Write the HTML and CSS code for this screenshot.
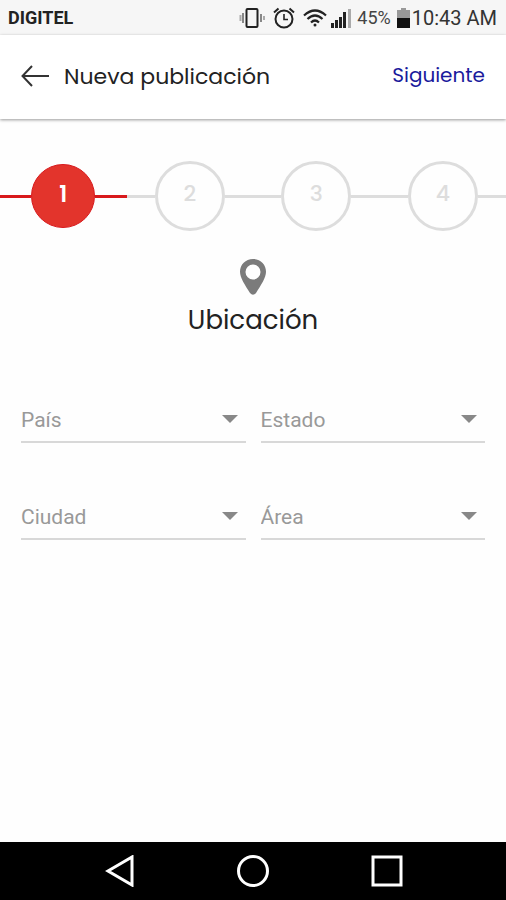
FILE: index.html
```
<!DOCTYPE html>
<html lang="es">
<head>
  <meta charset="UTF-8">
  <meta name="viewport" content="width=device-width, initial-scale=1">
  <title>Nueva publicación</title>
  <link rel="stylesheet" href="styles.css">
</head>
<body>
  <div class="status-bar">
    <span class="carrier">DIGITEL</span>
    <div class="status-icons">
      <!-- vibrar -->
      <svg width="26" height="22" viewBox="0 0 26 22">
        <rect x="7.5" y="2" width="11" height="18" rx="1" fill="none" stroke="#222" stroke-width="2"/>
        <path d="M4 6v10M22 7v8" stroke="#888" stroke-width="2"/>
        <path d="M1.500 8v6M25 9v4" stroke="#aaa" stroke-width="2"/>
      </svg>
      <!-- alarma -->
      <svg width="22" height="22" viewBox="0 0 22 22" fill="none" stroke="#222" stroke-width="2">
        <circle cx="11" cy="12" r="8.500"/>
        <path d="M11 7v5.500h4" stroke-width="1.600"/>
        <path d="M1 5.500L5.500 1.500M21 5.500L16.500 1.500"/>
      </svg>
      <!-- wifi -->
      <svg class="wifi" width="24" height="18" viewBox="0 0 24 18" fill="none" stroke="#222" stroke-width="2.200">
        <path d="M1 6.500Q12-3.500 23 6.500M4.500 10Q12 3 19.500 10M8 13.500Q12 9.500 16 13.500"/>
        <circle cx="12" cy="16" r="1.500" fill="#222" stroke="none"/>
      </svg>
      <!-- señal -->
      <svg width="20" height="20" viewBox="0 0 20 20">
        <path d="M0 15h3v5H0zM4 12h3v8H4zM8 9h3v11H8zM12 4h3v16h-3z" fill="#222"/>
        <path d="M17 1h3v19h-3z" fill="#aaa"/>
      </svg>
      <span class="percent">45%</span>
      <!-- batería -->
      <svg width="13" height="20" viewBox="0 0 13 20">
        <path d="M4 0h5v2h4v8H0V2h4z" fill="#999"/>
        <path d="M0 10h13v10H0z" fill="#111"/>
      </svg>
      <span class="clock">10:43 AM</span>
    </div>
  </div>

  <header class="toolbar">
    <button class="back" type="button" aria-label="Volver">
      <svg width="28" height="22" viewBox="0 0 28 22" fill="none" stroke="#333" stroke-width="2">
        <path d="M28 11H1.500M11 1L1.500 11L11 21"/>
      </svg>
    </button>
    <h1 class="title">Nueva publicación</h1>
    <button class="next" type="submit" form="location">Siguiente</button>
  </header>

  <main class="content">
    <ol class="steps">
      <li class="step active"><span class="number">1</span></li>
      <li class="step"><span class="number">2</span></li>
      <li class="step"><span class="number">3</span></li>
      <li class="step"><span class="number">4</span></li>
    </ol>

    <div class="heading">
      <svg width="26" height="36" viewBox="0 0 26 36">
        <path fill="#7b7b7b" fill-rule="evenodd" d="M13 0C5.500 0 0 5.500 0 12.800C0 19 5 26 10 34Q13 37.500 16 34C21 26 26 19 26 12.800C26 5.500 20.500 0 13 0zM13 5.500a7.500 7.500 0 1 1 0 15a7.500 7.500 0 1 1 0-15z"/>
      </svg>
      <h2>Ubicación</h2>
    </div>

    <form class="fields" id="location">
      <div class="field">
        <select aria-label="País"><option>País</option></select>
        <svg width="16" height="8" viewBox="0 0 16 8"><path d="M0 0h16L8 8z" fill="#888"/></svg>
      </div>
      <div class="field">
        <select aria-label="Estado"><option>Estado</option></select>
        <svg width="16" height="8" viewBox="0 0 16 8"><path d="M0 0h16L8 8z" fill="#888"/></svg>
      </div>
      <div class="field">
        <select aria-label="Ciudad"><option>Ciudad</option></select>
        <svg width="16" height="8" viewBox="0 0 16 8"><path d="M0 0h16L8 8z" fill="#888"/></svg>
      </div>
      <div class="field">
        <select aria-label="Área"><option>Área</option></select>
        <svg width="16" height="8" viewBox="0 0 16 8"><path d="M0 0h16L8 8z" fill="#888"/></svg>
      </div>
    </form>
  </main>

  <nav class="nav-bar">
    <button type="button" aria-label="Atrás">
      <svg width="32" height="32" viewBox="0 0 32 32"><path d="M29 2v28L5 16z"/></svg>
    </button>
    <button type="button" aria-label="Inicio">
      <svg width="32" height="32" viewBox="0 0 32 32"><circle cx="16" cy="16" r="14.500"/></svg>
    </button>
    <button type="button" aria-label="Recientes">
      <svg width="32" height="32" viewBox="0 0 32 32"><path d="M2 2h28v28H2z"/></svg>
    </button>
  </nav>
</body>
</html>
```
FILE: styles.css
```
* {
  box-sizing: border-box;
  margin: 0;
  padding: 0;
}
body {
  display: flex;
  flex-direction: column;
  min-height: 100vh;
  background: #fefefe;
  color: #222;
  font-family: Roboto, sans-serif;
}
button {
  border: 0;
  background: none;
  font-family: inherit;
  cursor: pointer;
}
svg {
  display: block;
  flex-shrink: 0;
}

/* barra de estado */
.status-bar {
  display: flex;
  align-items: center;
  justify-content: space-between;
  height: 35px;
  padding: 0 9px 0 8px;
  background: #f6f6f6;
}
.carrier {
  font-size: 18px;
  font-weight: 700;
}
.status-icons {
  display: flex;
  align-items: center;
  gap: 8px;
}
.wifi {
  margin-right: -4px;
}
.percent {
  margin: 0 -2px;
  font-size: 18px;
  color: #444;
}
.clock {
  margin-left: -6px;
  font-size: 20px;
  color: #333;
}

/* cabecera */
.toolbar {
  display: flex;
  align-items: center;
  height: 84px;
  padding: 0 21px 2px;
  background: #fff;
  box-shadow: 0 1px 3px rgba(0, 0, 0, .4);
}
.title {
  flex: 1;
  margin-left: 15px;
  font-family: Poppins, Inter, sans-serif;
  font-size: 22px;
  font-weight: 400;
}
.next {
  padding-bottom: 2px;
  font-family: Poppins, Inter, sans-serif;
  font-size: 20px;
  font-weight: 400;
  color: #1a1a9c;
}

/* pasos */
.content {
  flex: 1;
}
.steps {
  display: flex;
  padding-top: 42px;
  list-style: none;
}
.step {
  display: flex;
  flex: 1;
  align-items: center;
  height: 70px;
  color: #ddd;
}
.step::before,
.step::after {
  content: "";
  flex: 1;
  height: 3px;
  background: #ddd;
}
.number {
  width: 70px;
  height: 70px;
  border: 3px solid #ddd;
  border-radius: 50%;
  font-family: Poppins, Inter, sans-serif;
  font-size: 22px;
  font-weight: 500;
  line-height: 60px;
  text-align: center;
}
.active::before,
.active::after {
  background: #d8191c;
}
.active .number {
  width: 64px;
  height: 64px;
  border: 1px solid #d8191c;
  background: #e3342c;
  color: #fff;
  font-weight: 600;
}

.heading {
  display: flex;
  flex-direction: column;
  align-items: center;
  gap: 8px;
  padding-top: 28px;
}
.heading h2 {
  font-family: Poppins, Inter, sans-serif;
  font-size: 26px;
  font-weight: 400;
  line-height: 34px;
}

/* formulario */
.fields {
  display: grid;
  grid-template-columns: 1fr 1fr;
  gap: 53px 15px;
  padding: 62px 21px;
}
.field {
  display: grid;
  align-items: center;
}
.field select,
.field svg {
  grid-area: 1 / 1;
}
.field select {
  width: 100%;
  height: 44px;
  border: 0;
  border-bottom: 2px solid #d8d8d8;
  border-radius: 0;
  background: none;
  appearance: none;
  font-family: inherit;
  font-size: 21px;
  color: #999;
}
.field svg {
  justify-self: end;
  margin: 0 8px 4px 0;
  pointer-events: none;
}

/* botones del sistema */
.nav-bar {
  display: flex;
  justify-content: center;
  gap: 102px;
  padding: 13px 0;
  background: #000;
}
.nav-bar svg {
  fill: none;
  stroke: #fff;
  stroke-width: 3;
}
```
